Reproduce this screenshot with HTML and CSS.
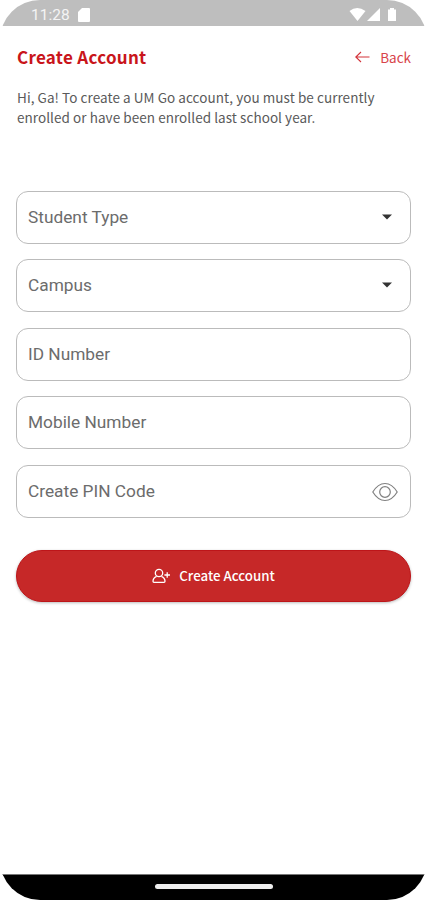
FILE: index.html
```html
<!DOCTYPE html>
<html lang="en">
<head>
<meta charset="utf-8">
<title>Create Account</title>
<link rel="stylesheet" href="styles.css">
</head>
<body>
<div class="screen">
  <header class="status">
    <span class="time">11:28</span>
    <svg class="sd" width="12" height="14" viewBox="0 0 12 14"><path d="M4 0h7q1 0 1 1v12q0 1-1 1H1q-1 0-1-1V4z" fill="#fff"/></svg>
    <svg class="signals" width="50" height="16" viewBox="0 0 50 16" fill="#fff"><path d="M.5 4Q8 -2 16.500 4L8.500 14z"/><path d="M31 1v13H18z"/><path d="M41 1h4v1.500h2V14h-8V2.500h2z"/></svg>
  </header>
  <main class="content">
    <div class="heading">
      <h1>Create Account</h1>
      <a class="back"><svg width="15" height="12" viewBox="0 0 15 12" fill="none" stroke="#d3343b" stroke-width="1.100"><path d="M.7 6H14.500M6 1L.8 6L6 11"/></svg><span>Back</span></a>
    </div>
    <p class="intro">Hi, Ga! To create a UM Go account, you must be currently<br>enrolled or have been enrolled last school year.</p>
    <form class="form">
      <div class="field"><span>Student Type</span><svg class="caret" width="10" height="6" viewBox="0 0 10 6"><path d="M0 .5h10L5 5.500z" fill="#333"/></svg></div>
      <div class="field"><span>Campus</span><svg class="caret" width="10" height="6" viewBox="0 0 10 6"><path d="M0 .5h10L5 5.500z" fill="#333"/></svg></div>
      <div class="field"><span>ID Number</span></div>
      <div class="field"><span>Mobile Number</span></div>
      <div class="field"><span>Create PIN Code</span><svg class="eye" width="26" height="20" viewBox="0 0 26 20" fill="none" stroke="#808080" stroke-width="1.200"><path d="M.8 10Q6 1.500 13 1.500T25.200 10Q20 18.500 13 18.500T.8 10z"/><circle cx="13" cy="10" r="5.300"/></svg></div>
      <button class="submit" type="button"><svg width="19" height="16" viewBox="0 0 19 16" fill="none" stroke="#fff" stroke-width="1.300"><circle cx="7" cy="5" r="3.700"/><path d="M4.600 8.300Q1 9.800 1 13.200Q1 14.300 2 14.300H12Q13 14.300 13 13.200Q13 9.800 9.400 8.300M15.200 4.200v5.600M12.400 7H18"/></svg><span>Create Account</span></button>
    </form>
  </main>
  <footer class="nav"><div class="pill"></div></footer>
</div>
</body>
</html>
```
FILE: styles.css
```css
* { box-sizing: border-box; }
body { margin: 0; background: #fff; font-family: "Noto Sans CJK SC", "Noto Sans", sans-serif; }
.screen { width: 427px; height: 900px; display: flex; flex-direction: column; border-radius: 40px; overflow: hidden; }
.status { height: 26px; flex: none; background: #bebebe; color: #f4f4f4; display: flex; align-items: center; padding: 3px 28px 0 31px; }
.time { font: 15.500px/20px Roboto, sans-serif; width: 47px; white-space: nowrap; }
.signals { margin-left: auto; }
.content { flex: 1; padding: 18px 16px 0; }
.heading { display: flex; justify-content: space-between; align-items: center; height: 26px; padding-left: 1px; }
h1 { margin: 0; font-size: 17px; line-height: 26px; font-weight: 700; color: #c9151b; letter-spacing: .28px; white-space: nowrap; }
.back { display: flex; align-items: center; gap: 10px; color: #d8444a; font-size: 13.500px; line-height: 20px; }
.intro { margin: 18px 0 0 1px; height: 40px; font-size: 13.500px; letter-spacing: .06px; line-height: 19.500px; color: #5a5a5a; white-space: nowrap; }
.form { display: flex; flex-direction: column; gap: 15.400px; margin-top: 63px; }
.field { height: 53px; border: 1.500px solid #bbb; border-radius: 12px; display: flex; align-items: center; justify-content: space-between; padding: 0 12px 1px 11px; font-family: Roboto, sans-serif; font-size: 17.300px; color: #6c6c6c; white-space: nowrap; }
.caret { margin-right: 6px; }
.eye { margin-top: 3px; }
.submit { width: 100%; height: 52px; margin-top: 17px; padding: 0; border: 1px solid #bd1519; border-radius: 26px; background: #c62828; color: #fff; box-shadow: 0 1px 3px #0004; display: flex; align-items: center; justify-content: center; gap: 8px; font: 500 13.300px/20px "Noto Sans CJK SC", sans-serif; }
.nav { height: 26px; flex: none; background: #000; border-top: 1px solid #777; display: flex; justify-content: center; padding-top: 9px; }
.pill { width: 118px; height: 5px; border-radius: 3px; background: #eee; }
```
